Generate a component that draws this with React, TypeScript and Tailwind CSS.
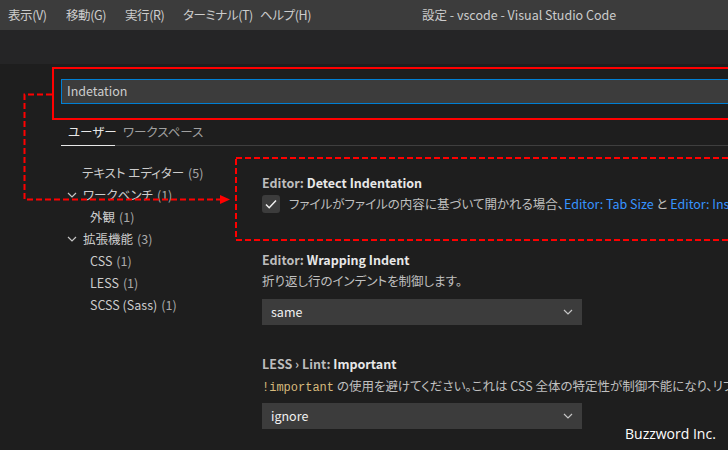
import React from 'react';

const font = "font-['Noto_Sans_CJK_JP',sans-serif] [font-feature-settings:'palt']";

const menus = [
  { label: '表示(V)', w: 'w-[58px]' },
  { label: '移動(G)', w: 'w-[59px]' },
  { label: '実行(R)', w: 'w-[58px]' },
  { label: 'ターミナル(T)', w: 'w-[77px]' },
  { label: 'ヘルプ(H)', w: 'w-[48px]' },
];

const ChevronDown = ({ className }: { className?: string }) => (
  <svg width="10" height="6" viewBox="0 0 10 6" className={className}>
    <path d="M1 1l4 4 4-4" fill="none" stroke="currentColor" strokeWidth="1.2" />
  </svg>
);

interface TreeItem {
  label: string;
  count: number;
  indent: 'top' | 'group' | 'child';
}

const tree: TreeItem[] = [
  { label: 'テキスト エディター', count: 5, indent: 'top' },
  { label: 'ワークベンチ', count: 1, indent: 'group' },
  { label: '外観', count: 1, indent: 'child' },
  { label: '拡張機能', count: 3, indent: 'group' },
  { label: 'CSS', count: 1, indent: 'child' },
  { label: 'LESS', count: 1, indent: 'child' },
  { label: 'SCSS (Sass)', count: 1, indent: 'child' },
];

const SettingTitle = ({ prefix, name }: { prefix: string; name: string }) => (
  <div className="h-[18px] leading-[18px] text-[12.5px] whitespace-nowrap">
    <span className="font-semibold text-[#bdbdbd]">{prefix}</span>
    <span className="font-bold text-[#e8e8e8]">{name}</span>
  </div>
);

const Select = ({ value }: { value: string }) => (
  <div className="w-[320px] h-[26px] bg-[#3c3c3c] flex items-center justify-between pl-[9px] pr-[9px] text-[12.5px] text-[#f0f0f0]">
    <span>{value}</span>
    <ChevronDown className="text-[#c5c5c5]" />
  </div>
);

const App: React.FC = () => {
  return (
    <div className={`relative w-[728px] h-[450px] overflow-hidden bg-[#1e1e1e] ${font}`}>
      {/* title bar */}
      <div className="h-[30px] bg-[#3c3c3c] flex items-center pl-[8px] text-[12.5px] text-[#cccccc] whitespace-nowrap">
        <div className="flex shrink-0 tracking-[-0.4px]">
          {menus.map((m) => (
            <div key={m.label} className={`${m.w} min-w-0 shrink-0`}>
              {m.label}
            </div>
          ))}
        </div>
        <span className="ml-[114px]">設定 - vscode - Visual Studio Code</span>
      </div>
      <div className="h-[34px] bg-[#252526]" />

      {/* settings editor */}
      <div className="pl-[61px] pt-[15px]">
        <div className="w-[700px] h-[25px] bg-[#3c3c3c] border border-[#007fd4] flex items-center pl-[5px] text-[12.5px] text-[#cccccc]">
          Indetation
        </div>

        <div className="mt-[15px] h-[27px] flex border-b border-[#3f3f3f] text-[12.5px] whitespace-nowrap">
          <div className="w-[54px] flex items-center pl-[7px] border-b border-[#e7e7e7] -mb-px text-[#e7e7e7]">
            ユーザー
          </div>
          <div className="flex items-center pl-[8px] text-[#a0a0a0]">ワークスペース</div>
        </div>

        <div className="flex">
          {/* tree */}
          <div className="w-[201px] shrink-0 pt-[16px] text-[12.5px]">
            {tree.map((t) => (
              <div
                key={t.label}
                className={`h-[22px] flex items-center whitespace-nowrap ${
                  t.indent === 'top' ? 'pl-[21px]' : t.indent === 'group' ? 'pl-[6px]' : 'pl-[29px]'
                }`}
              >
                {t.indent === 'group' && <ChevronDown className="text-[#c5c5c5] mr-[6px]" />}
                <span className="text-[#cccccc]">{t.label}</span>
                <span className="ml-[4px] text-[#a9a9a9]">({t.count})</span>
              </div>
            ))}
          </div>

          {/* settings list */}
          <div className="flex-1 min-w-0 overflow-hidden pt-[28px]">
            <SettingTitle prefix="Editor: " name="Detect Indentation" />
            <div className="mt-[3px] flex items-center h-[18px] text-[12.5px] whitespace-nowrap">
              <div className="w-[18px] h-[18px] shrink-0 rounded-[3px] bg-[#3c3c3c] flex items-center justify-center">
                <svg width="14" height="14" viewBox="0 0 14 14">
                  <path d="M2 7.5l3.2 3.2L12 3.5" fill="none" stroke="#f0f0f0" strokeWidth="1.5" />
                </svg>
              </div>
              <span className="ml-[9px] text-[#c0c0c0]">
                ファイルがファイルの内容に基づいて開かれる場合、
                <span className="text-[#3794ff]">Editor: Tab Size</span> と{' '}
                <span className="text-[#3794ff]">Editor: Insert Spaces</span>{' '}
                を自動的に検出するかどうかを制御します。
              </span>
            </div>

            <div className="mt-[38px]">
              <SettingTitle prefix="Editor: " name="Wrapping Indent" />
              <div className="mt-[3px] h-[18px] leading-[18px] text-[12.5px] text-[#c0c0c0] whitespace-nowrap">
                折り返し行のインデントを制御します。
              </div>
              <div className="mt-[9px]">
                <Select value="same" />
              </div>
            </div>

            <div className="mt-[30px]">
              <SettingTitle prefix="LESS › Lint: " name="Important" />
              <div className="mt-[4px] h-[18px] leading-[18px] text-[12.5px] text-[#c0c0c0] whitespace-nowrap">
                <span className="font-['Liberation_Mono',monospace] text-[12px] text-[#d7ba7d]">!important</span>{' '}
                の使用を避けてください。これは CSS 全体の特定性が制御不能になり、リファクタリングが必要であることを示しています。
              </div>
              <div className="mt-[8px]">
                <Select value="ignore" />
              </div>
            </div>
          </div>
        </div>
      </div>

      {/* red annotations */}
      <svg className="absolute inset-0 pointer-events-none" width="728" height="450" viewBox="0 0 728 450">
        <rect x="53" y="68" width="700" height="51" fill="none" stroke="#ff0000" strokeWidth="2" />
        <path d="M52 94.5H24.5V199.5H221" fill="none" stroke="#ff0000" strokeWidth="2" strokeDasharray="6 3" />
        <path d="M220 195L230 199.5L220 204Z" fill="#ff0000" />
        <rect x="236" y="158" width="520" height="82" fill="none" stroke="#ff0000" strokeWidth="2" strokeDasharray="6 3" />
      </svg>

      <div className="absolute left-[625px] top-[423px] text-[14px] text-white font-['Open_Sans',sans-serif] whitespace-nowrap">
        Buzzword Inc.
      </div>
    </div>
  );
};

export default App;
